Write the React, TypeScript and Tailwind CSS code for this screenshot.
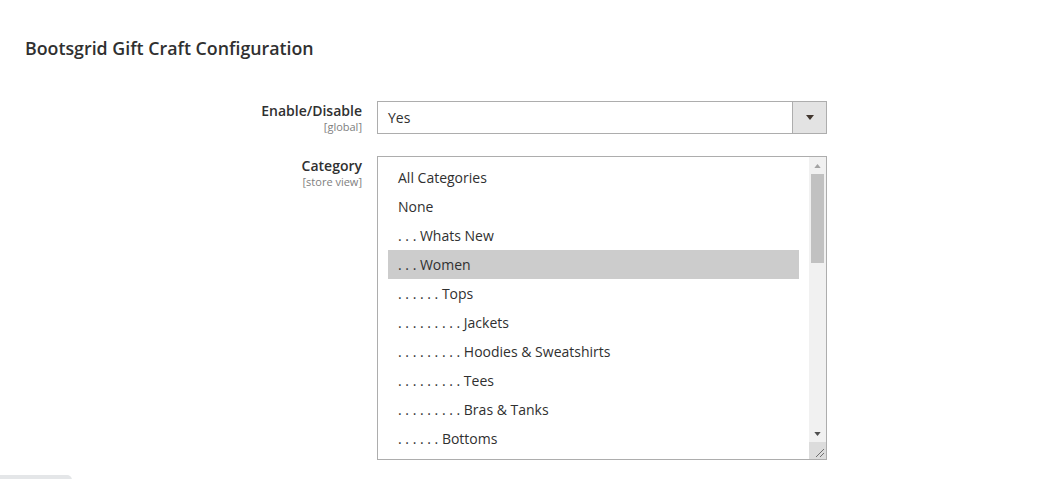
const categories = [
  "All Categories",
  "None",
  ". . . Whats New",
  ". . . Women",
  ". . . . . . Tops",
  ". . . . . . . . . Jackets",
  ". . . . . . . . . Hoodies & Sweatshirts",
  ". . . . . . . . . Tees",
  ". . . . . . . . . Bras & Tanks",
  ". . . . . . Bottoms",
];

function Caret({ up = false, className = "" }: { up?: boolean; className?: string }) {
  return (
    <svg width="8" height="5" viewBox="0 0 8 5" className={className}>
      <path d={up ? "M0 5 L4 0 L8 5 Z" : "M0 0 L8 0 L4 5 Z"} fill="currentColor" />
    </svg>
  );
}

export default function App() {
  return (
    <div className="min-h-screen bg-white font-['Open_Sans',sans-serif] text-[#303030] overflow-hidden">
      <div className="pl-[25px] pt-[37px]">
        <h1 className="text-[17.8px] leading-[22px] font-semibold text-[#303030]">
          Bootsgrid Gift Craft Configuration
        </h1>

        {/* Enable/Disable */}
        <div className="mt-[42px] flex">
          <div className="w-[352px] pr-[15px] pt-[1px] text-right">
            <div className="text-[14px] leading-[18px] font-semibold">Enable/Disable</div>
            <div className="text-[11px] leading-[13px] text-[#808080]">[global]</div>
          </div>
          <div className="flex h-[33px] w-[450px] border border-[#adadad] bg-white">
            <div className="flex-1 pl-[10px] text-[14px] leading-[31px]">Yes</div>
            <div className="flex w-[34px] items-center justify-center border-l border-[#adadad] bg-[#e3e3e3] text-[#41362f]">
              <Caret />
            </div>
          </div>
        </div>

        {/* Category */}
        <div className="mt-[22px] flex">
          <div className="w-[352px] pr-[15px] pt-[1px] text-right">
            <div className="text-[14px] leading-[18px] font-semibold">Category</div>
            <div className="text-[11px] leading-[13px] text-[#808080]">[store view]</div>
          </div>
          <div className="flex h-[304px] w-[450px] border border-[#adadad] bg-white">
            <div className="flex-1 overflow-hidden px-[10px] pt-[6px]">
              {categories.map((c) => (
                <div
                  key={c}
                  className={`h-[29px] whitespace-pre pl-[10px] text-[14px] leading-[29px] ${
                    c === ". . . Women" ? "bg-[#cccccc]" : ""
                  }`}
                >
                  {c}
                </div>
              ))}
            </div>
            <div className="flex w-[17px] flex-col bg-[#f1f1f1]">
              <div className="flex h-[17px] items-center justify-center text-[#a3a3a3]">
                <Caret up className="h-[4px] w-[7px]" />
              </div>
              <div className="mx-[2px] h-[89px] bg-[#c1c1c1]" />
              <div className="flex-1" />
              <div className="flex h-[17px] items-center justify-center text-[#505050]">
                <Caret className="h-[4px] w-[7px]" />
              </div>
              <div className="flex h-[17px] items-end justify-end bg-[#dcdcdc] p-[2px]">
                <svg width="9" height="9" viewBox="0 0 9 9">
                  <path d="M1 9 L9 1 M5 9 L9 5" stroke="#707070" strokeWidth="1" />
                </svg>
              </div>
            </div>
          </div>
        </div>
      </div>
      <div className="mt-[15px] h-[10px] w-[72px] rounded-tr-[5px] bg-[#e4e6e8]" />
    </div>
  );
}
